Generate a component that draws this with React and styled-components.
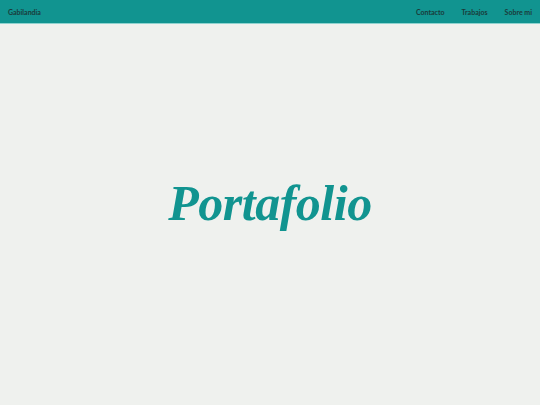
import React from "react";
import styled, { createGlobalStyle } from "styled-components";

const GlobalStyle = createGlobalStyle`
  html, body {
    margin: 0;
    padding: 0;
    background: #eff1ee;
  }
  #root {
    min-height: 100vh;
  }
`;

const Page = styled.div`
  min-height: 100vh;
  display: flex;
  flex-direction: column;
  background: #eff1ee;
`;

const NavBar = styled.header`
  height: 24px;
  background: #119490;
  border-bottom: 1px solid #8fd3cf;
  display: flex;
  align-items: center;
  justify-content: space-between;
  padding: 0 8px;
  box-sizing: border-box;
`;

const Brand = styled.span`
  font-family: "Lato", "DejaVu Sans", sans-serif;
  font-weight: 700;
  font-size: 7px;
  color: #1a3b3a;
`;

const NavLinks = styled.nav`
  display: flex;
  gap: 17px;
`;

const NavLink = styled.a`
  font-family: "Lato", "DejaVu Sans", sans-serif;
  font-weight: 700;
  font-size: 7px;
  color: #1a3b3a;
  text-decoration: none;
`;

const Hero = styled.main`
  flex: 1;
  display: flex;
  align-items: center;
  justify-content: center;
  padding-bottom: 24px;
`;

const Title = styled.h1`
  margin: 0;
  font-family: "Liberation Serif", "DejaVu Serif", serif;
  font-style: italic;
  font-weight: 700;
  font-size: 50px;
  color: #119490;
  letter-spacing: -0.5px;
`;

export default function App() {
  return (
    <>
      <GlobalStyle />
      <Page>
        <NavBar>
          <Brand>Gabilandia</Brand>
          <NavLinks>
            <NavLink href="#">Contacto</NavLink>
            <NavLink href="#">Trabajos</NavLink>
            <NavLink href="#">Sobre mi</NavLink>
          </NavLinks>
        </NavBar>
        <Hero>
          <Title>Portafolio</Title>
        </Hero>
      </Page>
    </>
  );
}
